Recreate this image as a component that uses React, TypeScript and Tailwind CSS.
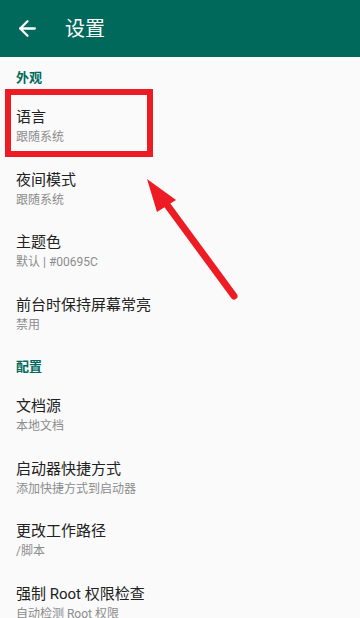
import { ArrowLeft } from 'lucide-react';

interface Pref {
  title: string;
  summary: string;
}

const SECTIONS: { header: string; items: Pref[] }[] = [
  {
    header: '外观',
    items: [
      { title: '语言', summary: '跟随系统' },
      { title: '夜间模式', summary: '跟随系统' },
      { title: '主题色', summary: '默认 | #00695C' },
      { title: '前台时保持屏幕常亮', summary: '禁用' },
    ],
  },
  {
    header: '配置',
    items: [
      { title: '文档源', summary: '本地文档' },
      { title: '启动器快捷方式', summary: '添加快捷方式到启动器' },
      { title: '更改工作路径', summary: '/脚本' },
      { title: '强制 Root 权限检查', summary: '自动检测 Root 权限' },
    ],
  },
];

export default function App() {
  return (
    <div
      className="relative w-[360px] h-[618px] overflow-hidden bg-[#fafafa]"
      style={{ fontFamily: 'Roboto, "Noto Sans CJK SC", sans-serif' }}
    >
      {/* Toolbar */}
      <div className="h-[57px] bg-[#00695c] flex items-center text-white">
        <ArrowLeft size={25} strokeWidth={2.2} className="ml-[15px]" />
        <span className="ml-[25px] text-[20px] leading-none">设置</span>
      </div>

      {SECTIONS.map((s) => (
        <div key={s.header}>
          <div className="pl-4 pt-[11px] pb-[8px] text-[13px] leading-[20px] font-bold text-[#00695c]">
            {s.header}
          </div>
          {s.items.map((p) => (
            <div key={p.title} className="pl-4 py-[11px]">
              <div className="text-[15px] leading-[21px] text-[#212121]">{p.title}</div>
              <div className="text-[12px] leading-[19.5px] text-[#8c8c8c]">{p.summary}</div>
            </div>
          ))}
        </div>
      ))}

      {/* annotation: red box + arrow */}
      <div className="absolute left-[5px] top-[89px] w-[148px] h-[68px] border-[6px] border-[#ed1c24]" />
      <svg className="absolute left-0 top-0" width="360" height="618" viewBox="0 0 360 618">
        <line x1="234" y1="296" x2="162" y2="198" stroke="#ed1c24" strokeWidth="7" strokeLinecap="round" />
        <polygon points="147,179 157,212 176,200" fill="#ed1c24" />
      </svg>
    </div>
  );
}
